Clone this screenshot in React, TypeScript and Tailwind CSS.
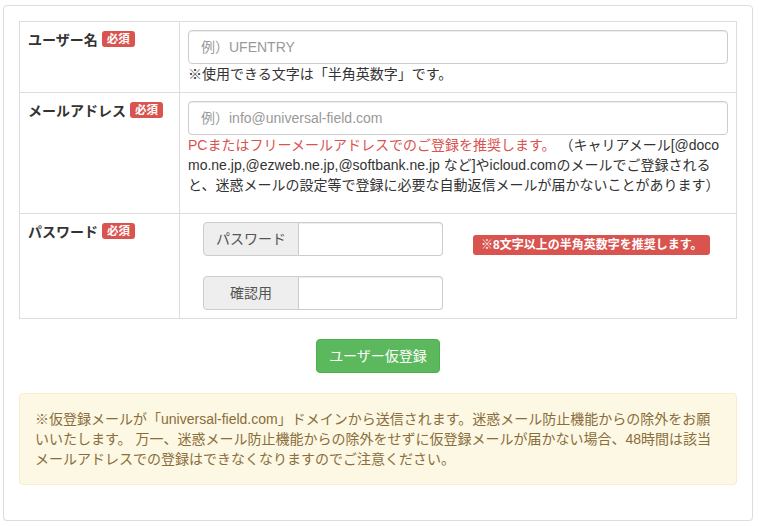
import React from "react";

const FONT = "font-['Liberation_Sans','Noto_Sans_CJK_JP',sans-serif]";

const Required: React.FC = () => (
  <span className="ml-1 inline-block h-4 rounded-[3px] bg-[#d9534f] px-[5px] align-[2px] text-[11.5px] leading-4 font-bold text-white">
    必須
  </span>
);

const Label: React.FC<{ text: string }> = ({ text }) => (
  <th className="w-[160px] border border-[#ddd] p-2 text-left align-top text-sm leading-5 font-bold text-[#333]">
    {text}
    <Required />
  </th>
);

const inputCls =
  "block h-[34px] w-full rounded border border-[#ccc] bg-white px-3 text-sm text-[#555] shadow-[inset_0_1px_1px_rgba(0,0,0,0.075)] outline-none placeholder:text-[#999]";

const PasswordGroup: React.FC<{ addon: string }> = ({ addon }) => (
  <div className="flex h-[34px] w-[240px]">
    <span className="flex w-[96px] shrink-0 items-center justify-center rounded-l border border-[#ccc] bg-[#eee] text-sm text-[#555]">
      {addon}
    </span>
    <input
      type="password"
      className="h-full w-full min-w-0 rounded-r border border-l-0 border-[#ccc] bg-white px-3 shadow-[inset_0_1px_1px_rgba(0,0,0,0.075)] outline-none"
    />
  </div>
);

export default function App() {
  return (
    <div className={`${FONT} bg-white pt-[5px] pl-[3px] text-sm leading-5 text-[#333]`}>
      <div className="w-[750px] rounded border border-[#ddd] bg-white p-[15px] shadow-[0_1px_1px_rgba(0,0,0,0.05)]">
        <table className="w-full border-collapse border border-[#ddd]">
          <tbody>
            <tr>
              <Label text="ユーザー名" />
              <td className="border border-[#ddd] p-2 align-top">
                <input className={inputCls} placeholder="例）UFENTRY" />
                <p>※使用できる文字は「半角英数字」です。</p>
              </td>
            </tr>
            <tr>
              <Label text="メールアドレス" />
              <td className="border border-[#ddd] p-2 align-top">
                <input className={inputCls} placeholder="例）info@universal-field.com" />
                <p className="mb-[10px] break-all">
                  <span className="text-[#d9534f]">
                    PCまたはフリーメールアドレスでのご登録を推奨します。
                  </span>{" "}
                  （キャリアメール[@docomo.ne.jp,@ezweb.ne.jp,@softbank.ne.jp
                  など]やicloud.comのメールでご登録されると、迷惑メールの設定等で登録に必要な自動返信メールが届かないことがあります）
                </p>
              </td>
            </tr>
            <tr>
              <Label text="パスワード" />
              <td className="border border-[#ddd] p-2 align-top">
                <div className="flex pl-[15px]">
                  <div className="flex flex-col gap-5">
                    <PasswordGroup addon="パスワード" />
                    <PasswordGroup addon="確認用" />
                  </div>
                  <div className="ml-[30px] pt-3">
                    <span className="inline-block h-5 rounded-[3px] bg-[#d9534f] px-2 text-xs leading-5 font-bold text-white">
                      ※8文字以上の半角英数字を推奨します。
                    </span>
                  </div>
                </div>
              </td>
            </tr>
          </tbody>
        </table>

        <div className="mt-5 flex justify-center">
          <button className="h-[34px] rounded border border-[#4cae4c] bg-[#5cb85c] px-3 text-sm text-white">
            ユーザー仮登録
          </button>
        </div>

        <div className="mt-5 mb-5 rounded border border-[#faebcc] bg-[#fcf8e3] p-[15px] text-[#8a6d3b]">
          ※仮登録メールが「universal-field.com」ドメインから送信されます。迷惑メール防止機能からの除外をお願いいたします。
          万一、迷惑メール防止機能からの除外をせずに仮登録メールが届かない場合、48時間は該当メールアドレスでの登録はできなくなりますのでご注意ください。
        </div>
      </div>
    </div>
  );
}
